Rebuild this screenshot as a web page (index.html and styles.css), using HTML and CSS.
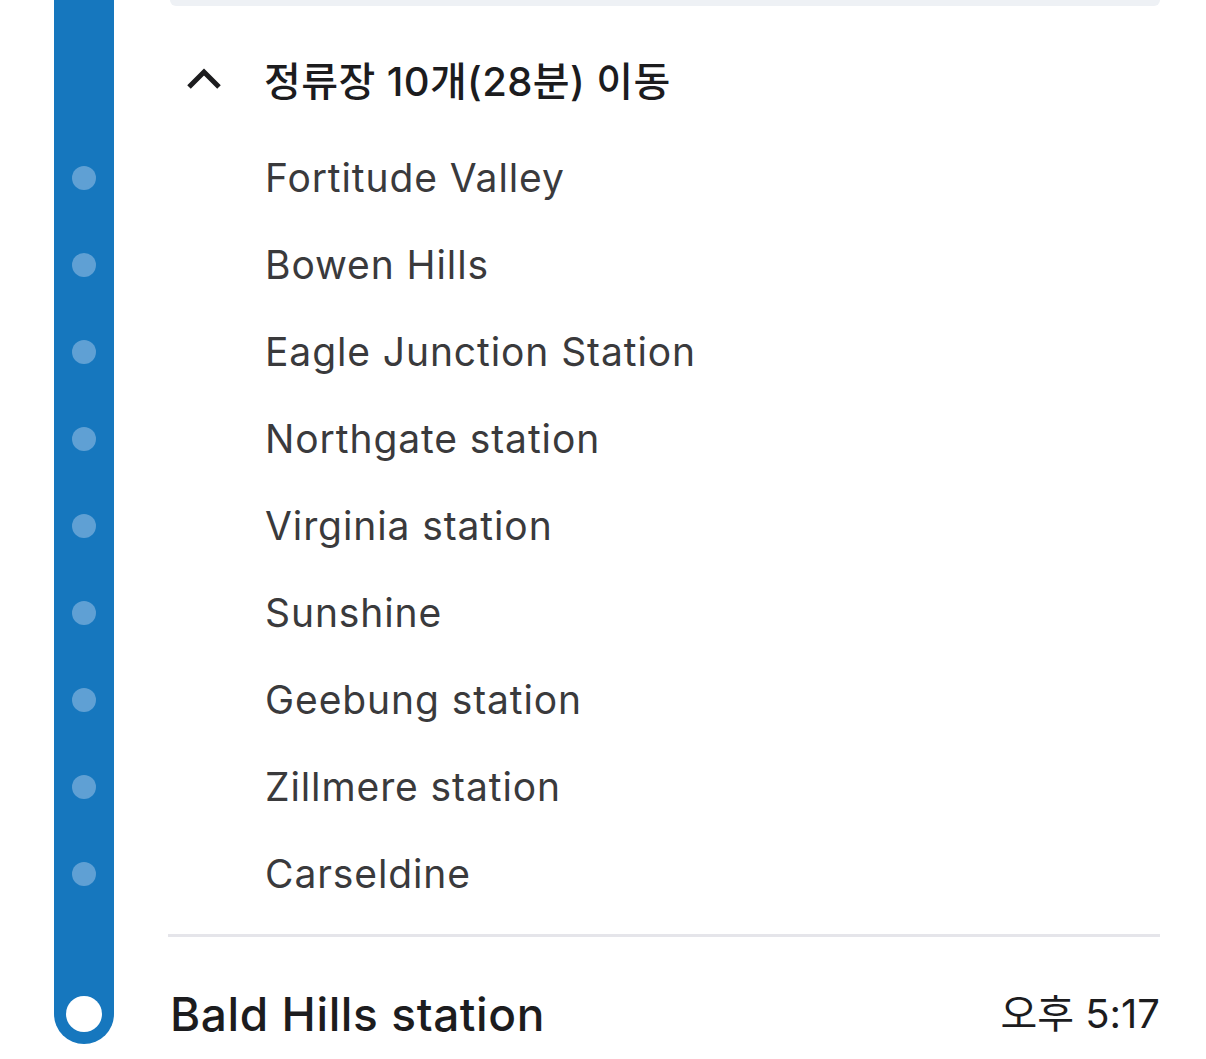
FILE: index.html
```html
<!DOCTYPE html>
<html lang="ko">
<head>
    <meta charset="UTF-8">
    <meta name="viewport" content="width=device-width, initial-scale=1.0">
    <title>정류장 이동</title>
    <link rel="stylesheet" href="styles.css">
</head>
<body>

    <div class="timeline">

        <!-- Bottom edge of the previous card -->
        <div class="row row-top">
            <div class="rail"></div>
            <div class="body">
                <div class="card-edge"></div>
            </div>
        </div>

        <!-- Collapsible header -->
        <div class="row row-toggle">
            <div class="rail"></div>
            <div class="body toggle">
                <svg class="chevron" width="36" height="22" viewBox="0 0 36 22">
                    <path d="M3 19 L18 4 L33 19" fill="none" stroke="#1c1c1e" stroke-width="5" stroke-linecap="butt" stroke-linejoin="miter"/>
                </svg>
                <span class="toggle-text">정류장 10개(28분) 이동</span>
            </div>
        </div>

        <!-- Intermediate stops -->
        <div class="row stop">
            <div class="rail"><span class="dot"></span></div>
            <div class="body stop-name">Fortitude Valley</div>
        </div>
        <div class="row stop">
            <div class="rail"><span class="dot"></span></div>
            <div class="body stop-name">Bowen Hills</div>
        </div>
        <div class="row stop">
            <div class="rail"><span class="dot"></span></div>
            <div class="body stop-name">Eagle Junction Station</div>
        </div>
        <div class="row stop">
            <div class="rail"><span class="dot"></span></div>
            <div class="body stop-name">Northgate station</div>
        </div>
        <div class="row stop">
            <div class="rail"><span class="dot"></span></div>
            <div class="body stop-name">Virginia station</div>
        </div>
        <div class="row stop">
            <div class="rail"><span class="dot"></span></div>
            <div class="body stop-name">Sunshine</div>
        </div>
        <div class="row stop">
            <div class="rail"><span class="dot"></span></div>
            <div class="body stop-name">Geebung station</div>
        </div>
        <div class="row stop">
            <div class="rail"><span class="dot"></span></div>
            <div class="body stop-name">Zillmere station</div>
        </div>
        <div class="row stop">
            <div class="rail"><span class="dot"></span></div>
            <div class="body stop-name">Carseldine</div>
        </div>

        <!-- Divider -->
        <div class="row row-divider">
            <div class="rail"></div>
            <div class="body">
                <div class="divider"></div>
            </div>
        </div>

        <!-- Final stop -->
        <div class="row row-end">
            <div class="rail rail-end"><span class="end-dot"></span></div>
            <div class="body end">
                <span class="end-name">Bald Hills station</span>
                <span class="end-time">오후 5:17</span>
            </div>
        </div>

    </div>

</body>
</html>
```

FILE: styles.css
```css
body {
    margin: 0;
    padding: 0;
    background-color: white;
    font-family: Inter, "Noto Sans CJK KR", sans-serif;
    color: #1c1c1e;
}

.timeline {
    padding-left: 54px;
    padding-right: 46px;
}

.row {
    display: flex;
    align-items: stretch;
}

.rail {
    width: 60px;
    flex-shrink: 0;
    background-color: #1677be;
    display: flex;
    align-items: center;
    justify-content: center;
}

.body {
    flex: 1;
    margin-left: 54px;
    display: flex;
    align-items: center;
}

/* Previous card */
.row-top {
    height: 6px;
}

.row-top .body {
    align-items: flex-start;
}

.card-edge {
    width: 100%;
    height: 6px;
    margin-left: 2px;
    background-color: #eef1f5;
    border-radius: 0 0 18px 18px;
}

/* Toggle header */
.row-toggle {
    height: 128px;
}

.toggle {
    padding-top: 18px;
}

.chevron {
    margin-left: 18px;
    display: block;
}

.toggle-text {
    margin-left: 42px;
    font-size: 40px;
    font-weight: 500;
    letter-spacing: 0.4px;
    color: #1c1c1e;
}

/* Stops */
.stop {
    height: 87px;
}

.dot {
    width: 24px;
    height: 24px;
    border-radius: 50%;
    background-color: #5fa0d4;
}

.stop-name {
    padding-left: 97px;
    font-size: 39px;
    color: #3a3a3c;
    letter-spacing: 0.9px;
}

/* Divider */
.row-divider {
    height: 36px;
}

.divider {
    width: 100%;
    height: 3px;
    background-color: #e5e5ea;
}

/* Final stop */
.row-end {
    height: 105px;
}

.rail-end {
    height: 91px;
    align-items: flex-end;
    padding-bottom: 12px;
    box-sizing: border-box;
    border-radius: 0 0 30px 30px;
}

.end-dot {
    width: 36px;
    height: 36px;
    border-radius: 50%;
    background-color: white;
}

.end {
    justify-content: space-between;
    align-items: flex-start;
    padding-top: 33px;
}

.end-name {
    margin-left: 2px;
    font-size: 46px;
    font-weight: 500;
    letter-spacing: 0.6px;
    color: #1c1c1e;
}

.end-time {
    font-size: 40px;
    color: #1c1c1e;
    margin-top: -4px;
}
```
